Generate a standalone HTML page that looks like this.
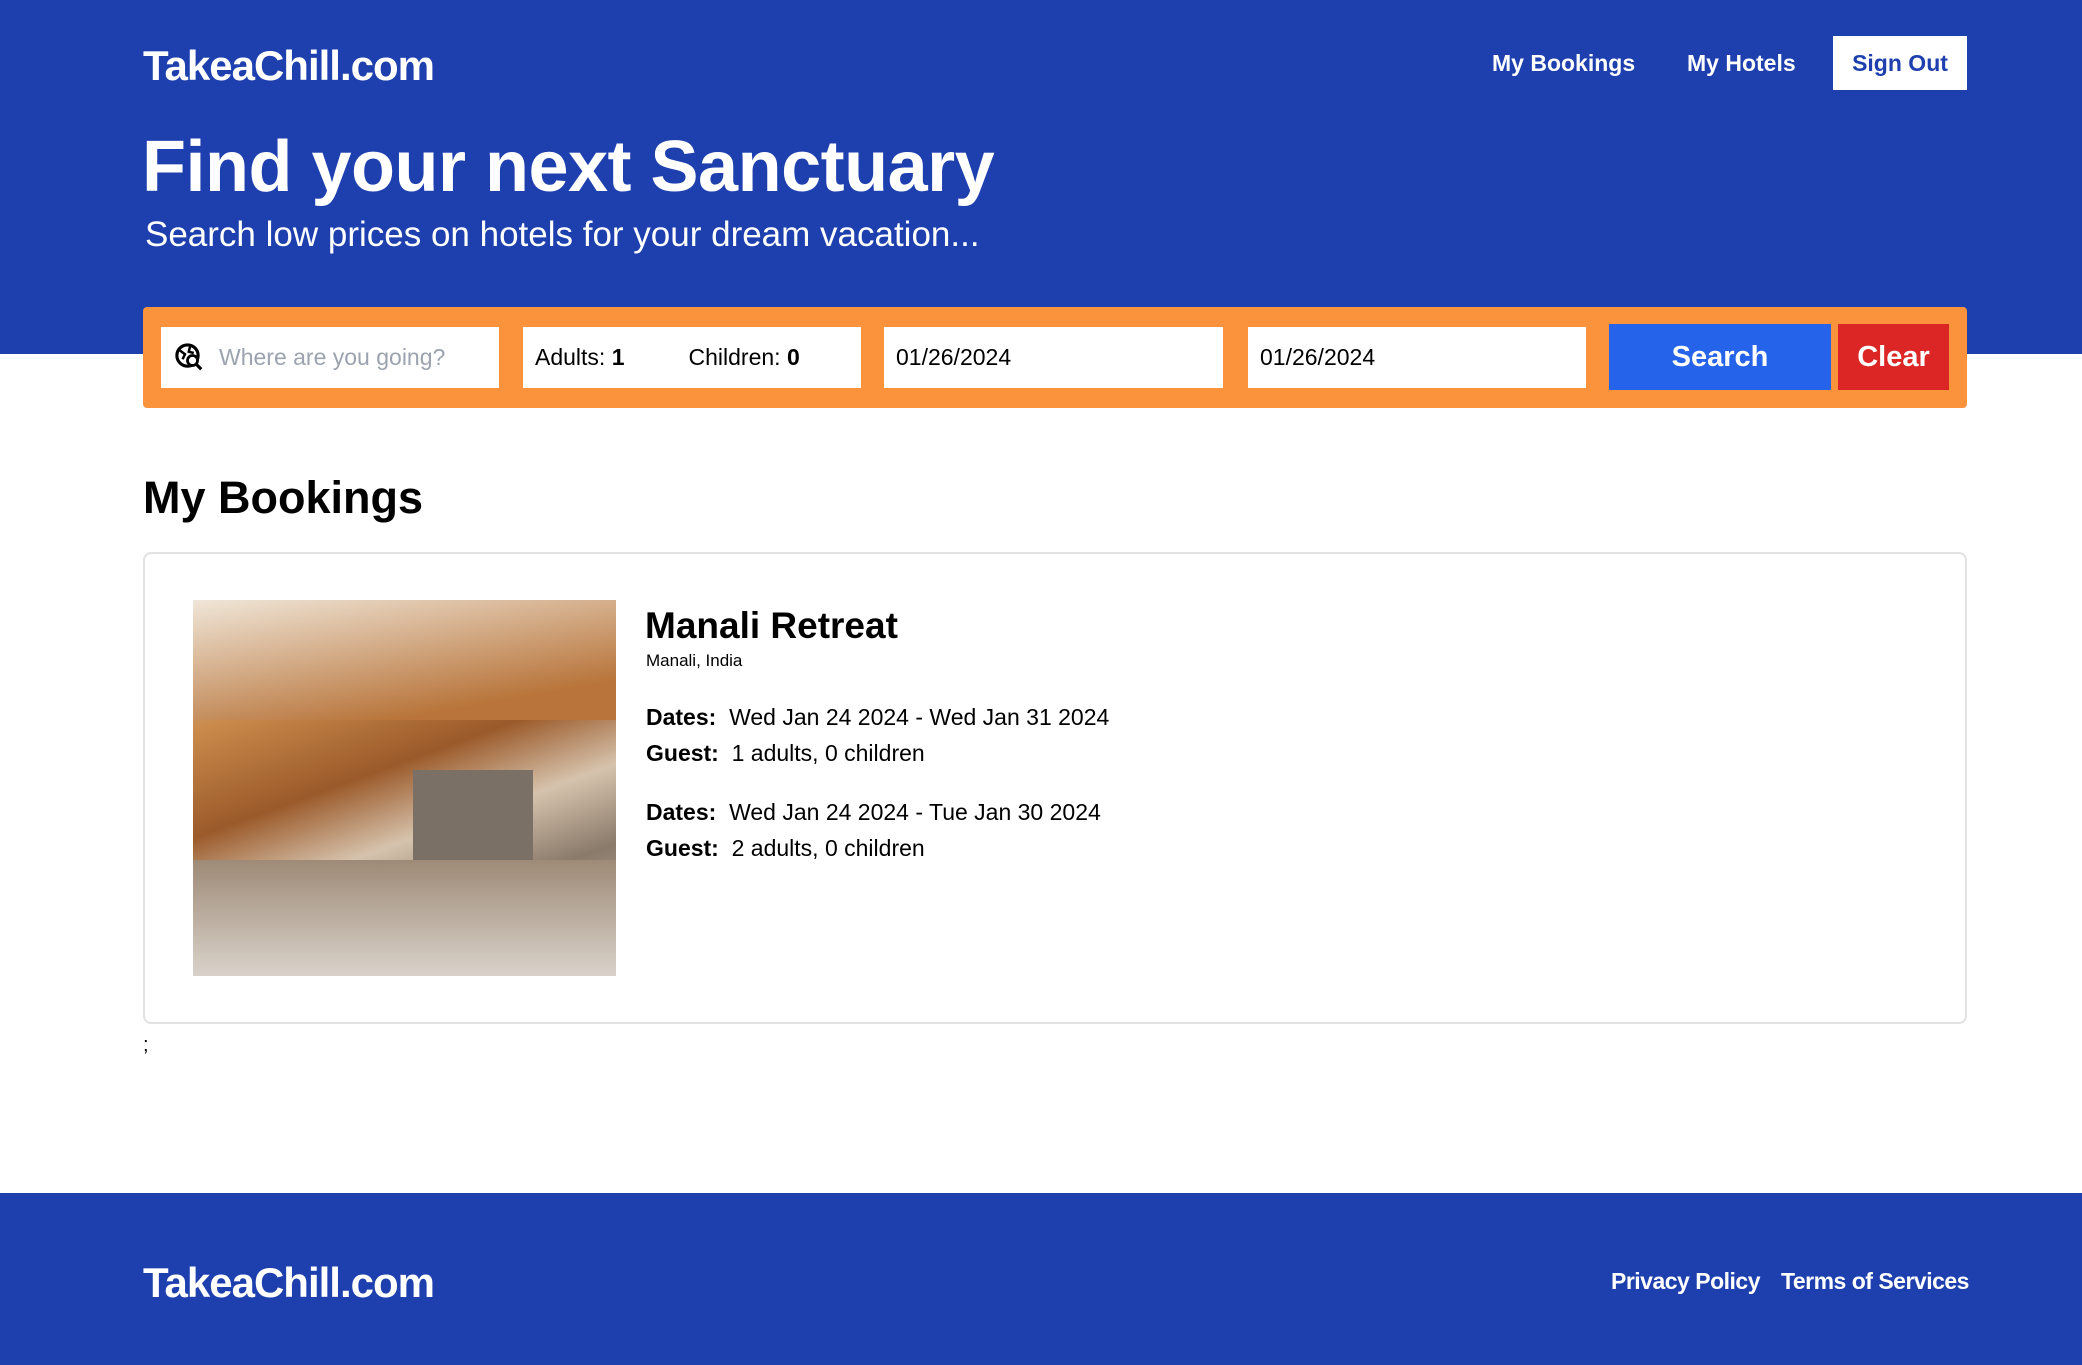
<!DOCTYPE html>
<html><head><meta charset="utf-8"><style>
*{margin:0;padding:0;box-sizing:border-box}
body{width:2082px;height:1365px;position:relative;background:#fff;font-family:"Liberation Sans",Arial,sans-serif;color:#000;overflow:hidden}
.abs{position:absolute;white-space:nowrap}
.hdr{position:absolute;left:0;top:0;width:2082px;height:354px;background:#1e40af}
.ftr{position:absolute;left:0;top:1193px;width:2082px;height:172px;background:#1e40af}
.logo{color:#fff;font-weight:bold;font-size:42px;letter-spacing:-1px}
.nav{color:#fff;font-weight:bold;font-size:23px}
.inp{position:absolute;background:#fff;top:327px;height:61px;font-size:23px;display:flex;align-items:center}
</style></head><body>
<div class="hdr"></div>
<div class="abs logo" style="left:143px;top:42px">TakeaChill.com</div>
<div class="abs nav" style="left:1492px;top:50px">My Bookings</div>
<div class="abs nav" style="left:1687px;top:50px">My Hotels</div>
<div class="abs" style="left:1833px;top:36px;width:134px;height:54px;background:#fff;color:#1e40af;font-weight:bold;font-size:23px;text-align:center;line-height:54px">Sign Out</div>
<div class="abs" style="left:142px;top:126px;color:#fff;font-weight:bold;font-size:72px;letter-spacing:-0.5px">Find your next Sanctuary</div>
<div class="abs" style="left:145px;top:215px;color:#fff;font-size:35px">Search low prices on hotels for your dream vacation...</div>
<div class="abs" style="left:143px;top:307px;width:1824px;height:101px;background:#fb923c;border-radius:4px"></div>
<div class="inp" style="left:161px;width:338px;padding-left:14px">
<svg width="30" height="30" viewBox="0 0 24 24"><circle cx="10" cy="10" r="8.5" fill="none" stroke="#000" stroke-width="2.5"/><path d="M4 6 l4 3 -2 4 M12 3 l-1 4 4 1" stroke="#000" stroke-width="2" fill="none"/><circle cx="14" cy="14" r="4" fill="#fff" stroke="#000" stroke-width="2.2"/><path d="M17 17 l4 4" stroke="#000" stroke-width="2.5"/></svg>
<span style="color:#9ca3af;margin-left:14px">Where are you going?</span></div>
<div class="inp" style="left:523px;width:338px;padding-left:12px"><span>Adults: <b>1</b></span><span style="margin-left:64px">Children: <b>0</b></span></div>
<div class="inp" style="left:884px;width:339px;padding-left:12px">01/26/2024</div>
<div class="inp" style="left:1248px;width:338px;padding-left:12px">01/26/2024</div>
<div class="abs" style="left:1609px;top:324px;width:222px;height:66px;background:#2563eb;color:#fff;font-weight:bold;font-size:29px;text-align:center;line-height:66px">Search</div>
<div class="abs" style="left:1838px;top:324px;width:111px;height:66px;background:#dc2626;color:#fff;font-weight:bold;font-size:29px;text-align:center;line-height:66px">Clear</div>
<div class="abs" style="left:143px;top:472px;font-weight:bold;font-size:45px">My Bookings</div>
<div class="abs" style="left:143px;top:552px;width:1824px;height:472px;border:2px solid #e2e2e2;border-radius:8px"></div>
<div class="abs" style="left:193px;top:600px;width:423px;height:376px;overflow:hidden;background:linear-gradient(160deg,#e9d9c2 0%,#c98a4b 25%,#9b5a2a 45%,#d6c3ad 60%,#8a7a6a 75%,#cfc8c0 100%)">
<div style="position:absolute;left:0;top:0;width:423px;height:120px;background:linear-gradient(170deg,#f0e6d8,#b8743a 80%)"></div>
<div style="position:absolute;left:220px;top:170px;width:120px;height:130px;background:#7b7066"></div>
<div style="position:absolute;left:0;top:260px;width:423px;height:116px;background:linear-gradient(180deg,#9e8a77,#d9d2ca)"></div>
</div>
<div class="abs" style="left:645px;top:605px;font-weight:bold;font-size:37px">Manali Retreat</div>
<div class="abs" style="left:646px;top:651px;font-size:17px">Manali, India</div>
<div class="abs" style="left:646px;top:704px;font-size:23px"><b>Dates:</b>&nbsp; Wed Jan 24 2024 - Wed Jan 31 2024</div>
<div class="abs" style="left:646px;top:740px;font-size:23px"><b>Guest:</b>&nbsp; 1 adults, 0 children</div>
<div class="abs" style="left:646px;top:799px;font-size:23px"><b>Dates:</b>&nbsp; Wed Jan 24 2024 - Tue Jan 30 2024</div>
<div class="abs" style="left:646px;top:835px;font-size:23px"><b>Guest:</b>&nbsp; 2 adults, 0 children</div>
<div class="abs" style="left:143px;top:1034px;font-size:20px">;</div>
<div class="ftr"></div>
<div class="abs logo" style="left:143px;top:1259px">TakeaChill.com</div>
<div class="abs nav" style="left:1611px;top:1268px;letter-spacing:-0.5px">Privacy Policy</div>
<div class="abs nav" style="left:1781px;top:1268px;letter-spacing:-0.5px">Terms of Services</div>
</body></html>
